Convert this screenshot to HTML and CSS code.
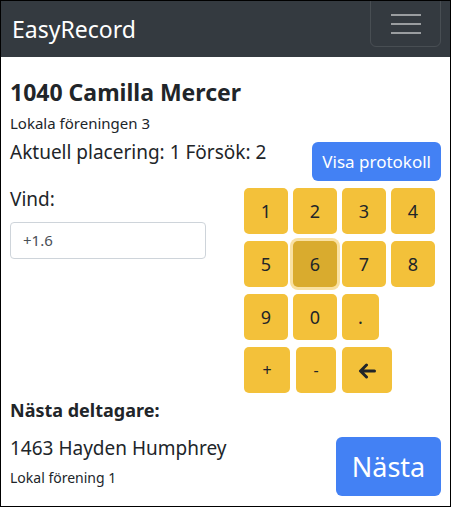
FILE: index.html
```html
<!DOCTYPE html>
<html lang="sv">

<head>
    <meta charset="UTF-8">
    <meta name="viewport" content="width=device-width, initial-scale=1.0">
    <title>EasyRecord</title>
    <link rel="stylesheet" href="styles.css">
</head>

<body>
    <div class="page">
        <nav class="navbar">
            <span class="brand">EasyRecord</span>
            <button class="toggler" aria-label="Meny">
                <span class="bar"></span>
                <span class="bar"></span>
                <span class="bar"></span>
            </button>
        </nav>

        <main class="content">
            <h1 class="athlete">1040 Camilla Mercer</h1>
            <div class="club">Lokala föreningen 3</div>

            <div class="status-row">
                <div class="status">Aktuell placering: 1 Försök: 2</div>
                <button class="btn btn-primary btn-protocol">Visa protokoll</button>
            </div>

            <div class="entry-row">
                <div class="wind">
                    <label class="wind-label" for="wind">Vind:</label>
                    <input class="wind-input" id="wind" type="text" value="+1.6">
                </div>
                <div class="keypad">
                    <div class="keys">
                        <button class="key">1</button>
                        <button class="key">2</button>
                        <button class="key">3</button>
                        <button class="key">4</button>
                    </div>
                    <div class="keys">
                        <button class="key">5</button>
                        <button class="key active">6</button>
                        <button class="key">7</button>
                        <button class="key">8</button>
                    </div>
                    <div class="keys">
                        <button class="key">9</button>
                        <button class="key">0</button>
                        <button class="key key-dot">.</button>
                    </div>
                    <div class="keys">
                        <button class="key key-sign">+</button>
                        <button class="key key-sign">-</button>
                        <button class="key key-back" aria-label="Radera">
                            <svg width="18" height="16" viewBox="0 0 18 16">
                                <path d="M16.5 8H3M8.5 2L2.5 8l6 6" fill="none" stroke="#212529" stroke-width="3" stroke-linecap="round" stroke-linejoin="round"/>
                            </svg>
                        </button>
                    </div>
                </div>
            </div>

            <h2 class="next-title">Nästa deltagare:</h2>
            <div class="next-row">
                <div class="next-info">
                    <div class="next-name">1463 Hayden Humphrey</div>
                    <div class="next-club">Lokal förening 1</div>
                </div>
                <button class="btn btn-primary btn-next">Nästa</button>
            </div>
        </main>
    </div>
</body>

</html>
```

FILE: styles.css
```css
body,
html {
    margin: 0;
    padding: 0;
    font-family: "Noto Sans", "Open Sans", sans-serif;
    color: #212529;
    background: #fff;
}

.page {
    height: 507px;
    box-sizing: border-box;
    border: 1px solid #000;
    overflow: hidden;
}

.navbar {
    display: flex;
    justify-content: space-between;
    align-items: center;
    height: 56px;
    padding: 0 9px 0 11px;
    background-color: #343a40;
}

.brand {
    color: #fff;
    font-size: 23px;
}

.toggler {
    align-self: flex-start;
    display: flex;
    flex-direction: column;
    justify-content: center;
    align-items: center;
    gap: 7px;
    width: 71px;
    height: 51px;
    margin-top: -5px;
    padding: 4px 0 0;
    background: transparent;
    border: 1px solid rgba(255, 255, 255, 0.1);
    border-radius: 6px;
}

.bar {
    display: block;
    width: 30px;
    height: 2px;
    background-color: #9a9da0;
}

.content {
    padding: 0 9px;
}

.athlete {
    margin: 22px 0 0;
    font-size: 23px;
    font-weight: 700;
    line-height: 1.2;
}

.club {
    margin-top: 6px;
    font-size: 15px;
}

.status-row {
    display: flex;
    justify-content: space-between;
    align-items: flex-start;
    margin-top: 6px;
}

.status {
    font-size: 19px;
}

.btn {
    border: none;
    color: #fff;
    font-family: inherit;
    cursor: pointer;
}

.btn-primary {
    background-color: #4381f4;
    border-radius: 6px;
}

.btn-protocol {
    height: 39px;
    margin-top: 3px;
    padding: 0 10px;
    font-size: 17px;
}

.entry-row {
    display: flex;
    margin-top: 7px;
}

.wind {
    width: 234px;
}

.wind-label {
    display: block;
    margin-top: -2px;
    font-size: 19px;
}

.wind-input {
    width: 196px;
    height: 37px;
    margin-top: 10px;
    box-sizing: border-box;
    padding: 0 12px;
    border: 1px solid #ced4da;
    border-radius: 4px;
    font-family: inherit;
    font-size: 15px;
    color: #495057;
}

.keypad {
    display: flex;
    flex-direction: column;
    gap: 7px;
}

.keys {
    display: flex;
    gap: 5px;
}

.key {
    height: 46px;
    min-width: 44px;
    padding: 0 14px;
    border: none;
    border-radius: 5px;
    background-color: #f3c13a;
    color: #212529;
    font-family: inherit;
    font-size: 18px;
}

.key.active {
    background-color: #d9ab2e;
    box-shadow: 0 0 0 3px #f9e1a2;
}

.key-dot {
    min-width: 37px;
}

.key-sign {
    font-size: 16px;
}

.key-sign:first-child {
    min-width: 46px;
}

.key-sign + .key-sign {
    min-width: 40px;
    margin-left: 1px;
}

.key-back {
    min-width: 50px;
    margin-left: 1px;
    padding: 4px 0 0;
}

.next-title {
    margin: 5px 0 0;
    font-size: 18px;
    font-weight: 700;
}

.next-row {
    display: flex;
    justify-content: space-between;
    align-items: flex-start;
}

.next-name {
    margin-top: 13px;
    font-size: 19px;
}

.next-club {
    margin-top: 7px;
    font-size: 14px;
}

.btn-next {
    width: 105px;
    height: 59px;
    margin-top: 15px;
    font-size: 27px;
}
```
